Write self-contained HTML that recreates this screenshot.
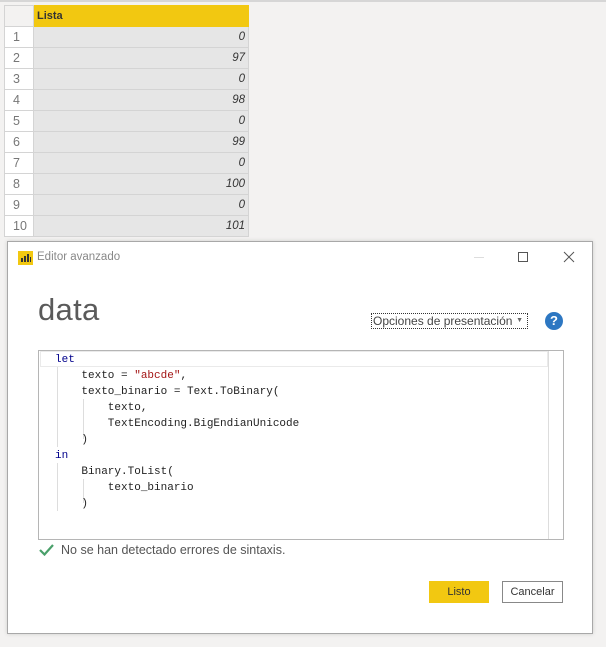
<!DOCTYPE html>
<html><head><meta charset="utf-8"><style>
*{margin:0;padding:0;box-sizing:border-box}
body{width:606px;height:647px;background:#f3f2f1;font-family:"Liberation Sans",sans-serif;position:relative;overflow:hidden}
.topline{position:absolute;left:0;top:0;width:606px;height:2px;background:#d6d6d6}
table{position:absolute;left:4px;top:5px;border-collapse:collapse;font-size:12px}
td{height:21px;border:1px solid #d4d4d4;padding:0 3px}
td.n{width:29px;background:#fff;color:#777;font-size:12.5px;padding-left:8px}
td.v{width:215px;background:#e6e6e6;text-align:right;font-style:italic;color:#333;font-size:11.5px}
td.h{background:#f2c811;font-weight:bold;font-size:11px;color:#333;border-color:#f2c811}
td.e{background:#f3f2f1;border-color:#d4d4d4}
.dlg{position:absolute;left:7px;top:241px;width:586px;height:393px;background:#fff;border:1px solid #a8a8a8;box-shadow:0 0 4px rgba(0,0,0,.15)}
.title{position:absolute;left:29px;top:9px;font-size:11.5px;color:#888}
.logo{position:absolute;left:10px;top:9px;width:15px;height:14px;background:#f2c811}
.logo i{position:absolute;bottom:3px;width:2px;background:#333}
.min{position:absolute;left:466px;top:15px;width:10px;height:1px;background:#ddd}
.max{position:absolute;left:510px;top:10px;width:10px;height:10px;border:1px solid #555}
.h1{position:absolute;left:30px;top:50px;font-size:31px;color:#5a5a5a;font-weight:normal;letter-spacing:.3px}
.opt{position:absolute;left:363px;top:71px;width:157px;height:16px;border:1px dotted #333;font-size:12px;color:#444;padding-left:1px;line-height:14px}
.opt span{position:absolute;right:4px;top:0;font-size:7px;color:#666}
.help{position:absolute;left:537px;top:70px;width:18px;height:18px;border-radius:50%;background:#2d77c2;color:#fff;font-weight:bold;font-size:13px;text-align:center;line-height:18px}
.code{position:absolute;left:30px;top:108px;width:526px;height:190px;border:1px solid #b5b5b5}
.cur{position:absolute;left:1px;top:0;width:508px;height:16px;border:1px solid #eaeaea}
.sb{position:absolute;left:509px;top:0;width:1px;height:188px;background:#ddd}
.sb2{position:absolute;left:509px;top:0;width:16px;height:16px;border-left:1px solid #ddd}
pre{position:absolute;left:16px;top:1px;font-family:"Liberation Mono",monospace;font-size:11px;line-height:16px;color:#222}
.k{color:#00008b}.s{color:#a31515}
.guide{position:absolute;width:1px;background:#ddd}
.ok{position:absolute;left:31px;top:301px;font-size:12.5px;color:#555}
.ok svg{vertical-align:-2px;margin-right:7px}
.btn1{position:absolute;left:421px;top:339px;width:60px;height:22px;background:#f2c811;font-size:11px;text-align:center;line-height:22px;color:#333}
.btn2{position:absolute;left:494px;top:339px;width:61px;height:22px;border:1px solid #888;font-size:11px;text-align:center;line-height:20px;color:#333}
</style></head><body>
<div class="topline"></div>
<table>
<tr><td class="n e"></td><td class="h">Lista</td></tr>
<tr><td class="n">1</td><td class="v">0</td></tr>
<tr><td class="n">2</td><td class="v">97</td></tr>
<tr><td class="n">3</td><td class="v">0</td></tr>
<tr><td class="n">4</td><td class="v">98</td></tr>
<tr><td class="n">5</td><td class="v">0</td></tr>
<tr><td class="n">6</td><td class="v">99</td></tr>
<tr><td class="n">7</td><td class="v">0</td></tr>
<tr><td class="n">8</td><td class="v">100</td></tr>
<tr><td class="n">9</td><td class="v">0</td></tr>
<tr><td class="n">10</td><td class="v">101</td></tr>
</table>
<div class="dlg">
<div class="logo"><i style="left:3px;height:4px"></i><i style="left:6px;height:6px"></i><i style="left:9px;height:8px"></i><i style="left:12px;height:5px;width:1px"></i></div>
<div class="title">Editor avanzado</div>
<div class="min"></div><div class="max"></div>
<svg style="position:absolute;left:555px;top:9px" width="12" height="12"><path d="M1 1L11 11M11 1L1 11" stroke="#555" stroke-width="1"/></svg>
<div class="h1">data</div>
<div class="opt">Opciones de presentación<span>▼</span></div>
<div class="help">?</div>
<div class="code">
<div class="cur"></div><div class="sb"></div><div class="sb2"></div>
<div class="guide" style="left:18px;top:16px;height:80px"></div>
<div class="guide" style="left:44px;top:48px;height:40px"></div>
<div class="guide" style="left:18px;top:112px;height:48px"></div>
<div class="guide" style="left:44px;top:128px;height:24px"></div>
<pre><span class="k">let</span>
    texto = <span class="s">"abcde"</span>,
    texto_binario = Text.ToBinary(
        texto,
        TextEncoding.BigEndianUnicode
    )
<span class="k">in</span>
    Binary.ToList(
        texto_binario
    )</pre>
</div>
<div class="ok"><svg width="15" height="12"><path d="M1 6L5.5 10.5L14 1" stroke="#4aa06a" stroke-width="2.2" fill="none"/></svg>No se han detectado errores de sintaxis.</div>
<div class="btn1">Listo</div>
<div class="btn2">Cancelar</div>
</div>
</body></html>
